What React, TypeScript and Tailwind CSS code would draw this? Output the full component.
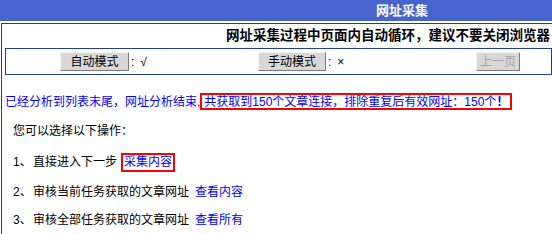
import React from 'react'

const modes = [
  { label: '自动模式', mark: '√', width: 'w-[252px] pl-[54px]', btn: 'w-[69px]' },
  { label: '手动模式', mark: '×', width: 'w-[218px]', btn: 'w-[68px]' },
]

const steps = [
  { no: '1、', text: '直接进入下一步', link: '采集内容', boxed: true, gap: 'mt-[11px]' },
  { no: '2、', text: '审核当前任务获取的文章网址', link: '查看内容', boxed: false, gap: 'mt-[10px]' },
  { no: '3、', text: '审核全部任务获取的文章网址', link: '查看所有', boxed: false, gap: 'mt-[8px]' },
]

function OldButton({ children, className, disabled }: { children: React.ReactNode; className?: string; disabled?: boolean }) {
  return (
    <button
      disabled={disabled}
      className={
        'h-[19px] flex items-center justify-center bg-[#d8d8d8] border border-t-[#f4f4f4] border-l-[#f4f4f4] border-b-[#7a7a7a] border-r-[#7a7a7a] text-[12px] leading-none ' +
        (disabled ? 'text-[#a6a6a6] ' : 'text-black ') +
        (className ?? '')
      }
    >
      {children}
    </button>
  )
}

export default function App() {
  return (
    <div className="w-[552px] h-[234px] overflow-hidden bg-white font-['Liberation_Sans','Noto_Sans_CJK_SC',sans-serif] text-black">
      {/* title bar */}
      <div className="w-[804px] h-[21px] bg-[#4664cc] flex items-center justify-center text-white font-bold text-[13px]">
        网址采集
      </div>

      {/* main frame */}
      <div className="mt-[2px] ml-[1px] w-[600px] h-[300px] border-l border-t border-[#213f8f]">
        <div className="w-[548px] h-[24px] flex items-center justify-end font-bold text-[13.5px] leading-none">
          网址采集过程中页面内自动循环，建议不要关闭浏览器
        </div>

        <div className="ml-[3px] w-[547px] h-[27px] border border-[#213f8f] flex items-center">
          {modes.map((m) => (
            <div key={m.label} className={'flex items-center ' + m.width}>
              <OldButton className={m.btn}>{m.label}</OldButton>
              <span className="ml-[2px] text-[12px]">:</span>
              <span className="ml-[6px] text-[12px]">{m.mark}</span>
            </div>
          ))}
          <OldButton disabled className="w-[44px]">上一页</OldButton>
        </div>

        <div className="mt-[18px] h-[17px] pl-[3px] flex items-center text-[12px] text-[#0000ff] whitespace-nowrap">
          已经分析到列表末尾，网址分析结束,
          <span className="h-[17px] px-[2px] flex items-center border-2 border-[#ff0000]">
            共获取到150个文章连接，排除重复后有效网址：150个
            <b>！</b>
          </span>
        </div>

        <div className="pl-[11px] text-[12px]">
          <div className="mt-[11px] h-[20px] flex items-center">您可以选择以下操作：</div>
          {steps.map((s) => (
            <div key={s.no} className={'h-[20px] flex items-center ' + s.gap}>
              <span className="w-[20px]">{s.no}</span>
              <span>{s.text}</span>
              {s.boxed ? (
                <span className="ml-[4px] h-[19px] px-[1px] flex items-center border-2 border-[#ff0000] text-[#0000ff]">
                  {s.link}
                </span>
              ) : (
                <span className="ml-[6px] text-[#0000ff]">{s.link}</span>
              )}
            </div>
          ))}
        </div>
      </div>
    </div>
  )
}
